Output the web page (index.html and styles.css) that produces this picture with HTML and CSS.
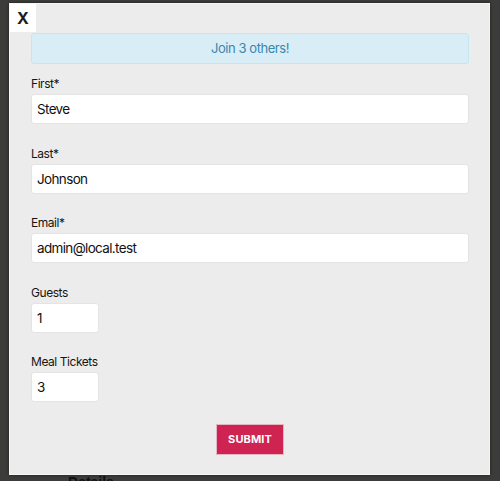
FILE: index.html
```html
<!DOCTYPE html>
<html>
<head>
<meta charset="utf-8">
<link rel="stylesheet" href="styles.css">
</head>
<body>
<div class="modal">
  <button class="close" type="button">X</button>
  <div class="alert">Join 3 others!</div>
  <form class="form">
    <div class="field">
      <label class="label">First*</label>
      <input class="input" type="text" value="Steve">
    </div>
    <div class="field">
      <label class="label">Last*</label>
      <input class="input" type="text" value="Johnson">
    </div>
    <div class="field">
      <label class="label">Email*</label>
      <input class="input" type="text" value="admin@local.test">
    </div>
    <div class="field">
      <label class="label">Guests</label>
      <input class="input input-small" type="text" value="1">
    </div>
    <div class="field">
      <label class="label">Meal Tickets</label>
      <input class="input input-small" type="text" value="3">
    </div>
    <div class="actions">
      <button class="submit" type="button">SUBMIT</button>
    </div>
  </form>
</div>
<div class="behind">Details</div>
</body>
</html>
```
FILE: styles.css
```css
html, body {
  margin: 0;
  padding: 0;
  height: 100%;
  overflow: hidden;
}
body {
  background: #3c3c3b;
  font-family: Inter, "Noto Sans", sans-serif;
  color: #222;
}
.modal {
  position: relative;
  z-index: 2;
  margin: 3px 0 0 9px;
  width: 481px;
  box-sizing: border-box;
  background: #ececec;
  border: 1px solid #f6f6f6;
  padding: 29px 20px 19px 21px;
  box-shadow: 0 0 3px rgba(0, 0, 0, 0.5);
}
.close {
  position: absolute;
  top: 0;
  left: 0;
  width: 26px;
  height: 28px;
  margin: 0;
  padding: 0;
  border: 0;
  background: #fff;
  color: #1c1c1c;
  font-family: Inter, sans-serif;
  font-weight: 700;
  font-size: 16px;
  line-height: 28px;
  text-align: center;
}
.alert {
  background: #d9edf7;
  border: 1px solid #c4e6f1;
  border-radius: 3px;
  color: #3a87ad;
  font-size: 13px;
  letter-spacing: -0.45px;
  line-height: 17px;
  padding: 6px 10px;
  text-align: center;
}
.form {
  margin: 12px 0 0 0;
}
.field {
  margin-bottom: 21.5px;
}
.label {
  display: block;
  font-size: 12px;
  letter-spacing: -0.45px;
  line-height: 15px;
  margin-bottom: 3px;
  color: #151515;
}
.input {
  display: block;
  box-sizing: border-box;
  width: 100%;
  height: 30px;
  margin: 0;
  padding: 0 5px;
  border: 1px solid #e4e4e4;
  border-radius: 3px;
  background: #fff;
  font-family: Inter, sans-serif;
  font-size: 13.5px;
  letter-spacing: -0.65px;
  color: #111;
  outline: none;
}
.input-small {
  width: 68px;
}
.field:last-of-type {
  margin-bottom: 21px;
}
.actions {
  display: flex;
  justify-content: center;
}
.submit {
  width: 68px;
  height: 31px;
  margin: 0;
  padding: 0;
  border: 1px solid #e6b5c2;
  background: #cf2351;
  color: #fff;
  font-family: Inter, sans-serif;
  font-weight: 700;
  font-size: 11px;
  letter-spacing: 0.1px;
}
.behind {
  position: relative;
  z-index: 1;
  margin: -1px 0 0 68px;
  font-family: "Liberation Sans", Arial, sans-serif;
  font-weight: 700;
  font-size: 14px;
  line-height: 16px;
  color: #111;
}
```
